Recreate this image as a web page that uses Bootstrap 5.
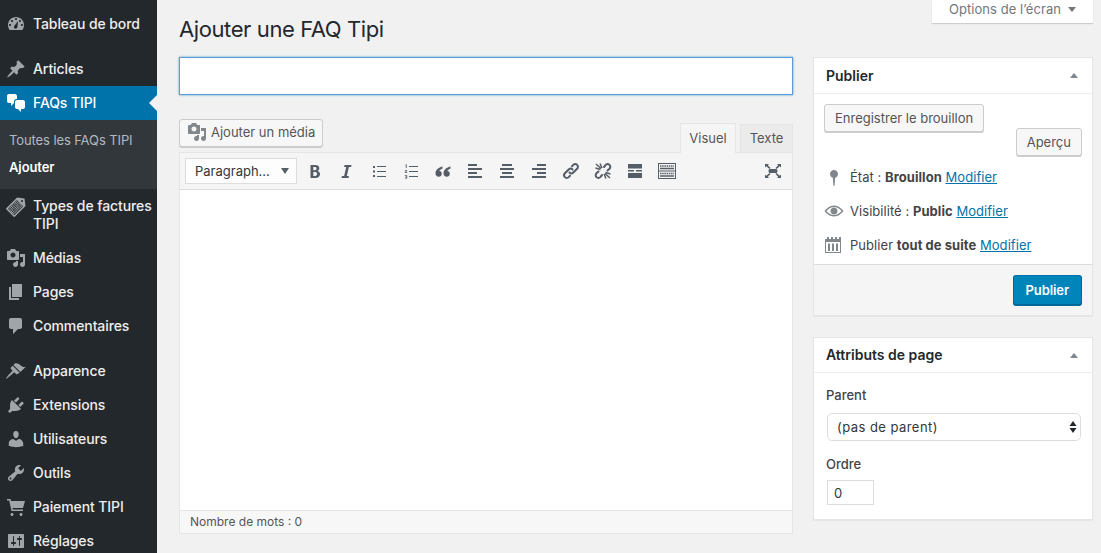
<!DOCTYPE html>
<html lang="fr">
<head>
    <meta charset="UTF-8">
    <meta name="viewport" content="width=device-width, initial-scale=1.0">
    <title>Ajouter une FAQ Tipi</title>
    <link rel="stylesheet" href="https://cdn.jsdelivr.net/npm/bootstrap@5.3.0/dist/css/bootstrap.min.css">
    <style>
        html, body { height: 553px; overflow: hidden; }
        body { background: #f1f1f1; color: #444; font-family: Inter, "Liberation Sans", sans-serif; font-size: 13px; line-height: 1.4; }
        a { color: #0073aa; }
        svg { fill: currentColor; flex: none; display: block; }

        .wp-side { width: 157px; height: 553px; background: #23282d; flex: none; }
        .wp-item { height: 34px; padding-left: 6px; color: #eee; font-size: 14px; font-weight: 500; letter-spacing: -.1px; gap: 7px; }
        .wp-item svg { color: #a0a5aa; width: 20px; height: 20px; }
        .wp-gap { margin-top: 11px; }
        .wp-item.wp-current { background: #0073aa; color: #fff; position: relative; }
        .wp-item.wp-current svg { color: #fff; }
        .wp-current::after { content: ""; position: absolute; right: 0; top: 9px; border: 8px solid transparent; border-right-color: #f1f1f1; border-left: 0; }
        .wp-sub { background: #32373c; height: 69px; padding: 9px 9px 0; }
        .wp-sub div { height: 27px; line-height: 23px; color: #b4b9be; font-size: 13px; letter-spacing: -.1px; }
        .wp-sub .wp-sub-on { color: #fff; font-weight: 600; }
        .wp-tall { height: 52px; line-height: 18px; align-items: flex-start !important; padding-top: 8px; }

        .wp-main { width: 944px; position: relative; padding: 0 8px 0 22px; }
        .wp-screen { position: absolute; right: 8px; top: 0; width: 161px; height: 23px; padding-bottom: 4px; background: #fff; box-shadow: 0 1px 1px rgba(0,0,0,.15); color: #72777c; gap: 7px; letter-spacing: .05px; }
        .wp-screen i { border: 4px solid transparent; border-top: 5px solid #72777c; border-bottom: 0; }
        .wp-title { font-size: 22px; font-weight: 400; color: #23282d; line-height: 29px; margin: 0; padding-top: 15px; letter-spacing: -.4px; height: 57px; }

        .wp-col-left { width: 614px; margin-right: 20px; }
        .wp-col-right { width: 280px; }
        .wp-titlein { height: 38px; border-radius: 0; border: 1px solid #5b9dd9; box-shadow: 0 0 2px rgba(30,140,190,.8); }
        .wp-titlein:focus { border-color: #5b9dd9; box-shadow: 0 0 2px rgba(30,140,190,.8); }

        .wp-btn { background: #f7f7f7; border: 1px solid #ccc; border-radius: 3px; box-shadow: 0 1px 0 #ccc; color: #555; font-size: 13px; height: 28px; padding: 0 10px; line-height: 26px; white-space: nowrap; }
        .wp-btn svg { color: #82878c; }
        .wp-btn-media { padding: 0 7px 2px 7px; }
        .wp-btn-pub { background: #0085ba; border: 1px solid #006799; border-top-color: #0073aa; box-shadow: 0 1px 0 #006799; color: #fff; font-weight: 600; height: 30px; line-height: 28px; padding: 0 12px; letter-spacing: -.1px; }

        .wp-edhead { height: 33px; margin-top: 24px; }
        .wp-tab { border: 1px solid #e5e5e5; border-bottom: 0; background: #ebebeb; color: #555; height: 28px; line-height: 27px; text-align: center; }
        .wp-tab-on { background: #f5f5f5; width: 56px; height: 30px; line-height: 28px; margin-bottom: -1px; position: relative; }
        .wp-tab-off { width: 53px; margin-left: 4px; }
        .wp-editor { border: 1px solid #e5e5e5; background: #fff; }
        .wp-tools { height: 37px; background: #f5f5f5; border-bottom: 1px solid #ddd; padding-left: 5px; color: #555d66; position: relative; }
        .wp-fmt { width: 112px; height: 26px; background: #fdfdfd; border: 1px solid #ddd; padding: 0 7px 0 9px; color: #32373c; font-size: 13px; margin-right: 2px; }
        .wp-fmt i { border: 4px solid transparent; border-top: 6px solid #555d66; border-bottom: 0; }
        .wp-tbtn { width: 32px; height: 20px; }
        .wp-tbtn svg { width: 20px; height: 20px; }
        .wp-canvas { height: 320px; }
        .wp-status { height: 23px; background: #f7f7f7; border-top: 1px solid #e5e5e5; padding-left: 10px; font-size: 12px; color: #555; }

        .wp-box { background: #fff; border: 1px solid #e5e5e5; box-shadow: 0 1px 1px rgba(0,0,0,.04); }
        .wp-boxhead { height: 36px; border-bottom: 1px solid #eee; padding: 0 12px; font-size: 14px; font-weight: 600; color: #23282d; }
        .wp-boxhead i { border: 4px solid transparent; border-bottom: 5px solid #82878c; border-top: 0; margin-right: 2px; }
        .wp-row { height: 34px; gap: 6px; padding-left: 10px; color: #444; letter-spacing: .05px; }
        .wp-row svg { color: #82878c; width: 20px; height: 20px; }
        .wp-pubfoot { height: 51px; background: #f5f5f5; border-top: 1px solid #ddd; padding: 0 10px; margin-top: 2px; }
        .wp-label { font-weight: 500; color: #444; }
        .wp-select { height: 28px; width: 254px; border: 1px solid #ddd; border-radius: 5px; padding: 1px 9px 0; font-size: 13px; letter-spacing: .45px; color: #32373c; background-color: #fff; background-image: url("data:image/svg+xml,%3Csvg xmlns='http://www.w3.org/2000/svg' width='8' height='12'%3E%3Cpath d='M4 0l3.5 5h-7zM4 12L.5 7h7z' fill='%2323282d'/%3E%3C/svg%3E"); background-position: right 3px center; background-size: 8px 12px; }
        .wp-num { height: 25px; width: 47px; border: 1px solid #ddd; border-radius: 0; padding: 0 6px; font-size: 13px; color: #32373c; }
    </style>
</head>
<body>
<div class="d-flex">
    <!-- Menu admin -->
    <nav class="wp-side">
        <div class="wp-item d-flex align-items-center" style="margin-top:7px">
            <svg viewBox="0 0 20 20"><path fill-rule="evenodd" d="M3.76 16h12.48c1.1-1.37 1.76-3.11 1.76-5 0-4.42-3.58-8-8-8s-8 3.58-8 8c0 1.89.66 3.63 1.76 5zM10 4c.55 0 1 .45 1 1s-.45 1-1 1-1-.45-1-1 .45-1 1-1zM6 6c.55 0 1 .45 1 1s-.45 1-1 1-1-.45-1-1 .45-1 1-1zm8 0c.55 0 1 .45 1 1s-.45 1-1 1-1-.45-1-1 .45-1 1-1zm-5.37 5.55L12 7l-.6 6.12c-.09.88-.84 1.55-1.72 1.55-.96 0-1.75-.79-1.75-1.75 0-.54.27-1.04.7-1.37zM4 10c.55 0 1 .45 1 1s-.45 1-1 1-1-.45-1-1 .45-1 1-1zm12 0c.55 0 1 .45 1 1s-.45 1-1 1-1-.45-1-1 .45-1 1-1z"/></svg>
            Tableau de bord
        </div>
        <div class="wp-item wp-gap d-flex align-items-center">
            <svg viewBox="0 0 20 20"><path d="M10.44 3.02l1.82-1.82 6.36 6.35-1.83 1.82c-1.05-.68-2.48-.57-3.41.36l-.75.75c-.92.93-1.04 2.35-.35 3.41l-1.83 1.82-2.41-2.41-2.8 2.79c-.42.42-3.38 2.71-3.8 2.29s1.86-3.39 2.28-3.81l2.79-2.79L4.1 9.36l1.83-1.82c1.05.69 2.48.57 3.4-.36l.75-.75c.93-.92 1.05-2.35.36-3.41z"/></svg>
            Articles
        </div>
        <div class="wp-item wp-current d-flex align-items-center">
            <svg viewBox="0 0 20 20"><path d="M11 6h-.82C9.07 6 8 7.2 8 8.16V10l-3 3v-3H3c-1.1 0-2-.9-2-2V3c0-1.1.9-2 2-2h6c1.1 0 2 .9 2 2v3zm0 1h6c1.1 0 2 .9 2 2v5c0 1.1-.9 2-2 2h-2v3l-3-3h-1c-1.1 0-2-.9-2-2V9c0-1.1.9-2 2-2z"/></svg>
            FAQs TIPI
        </div>
        <div class="wp-sub">
            <div>Toutes les FAQs TIPI</div>
            <div class="wp-sub-on">Ajouter</div>
        </div>
        <div class="wp-item wp-tall d-flex">
            <svg viewBox="0 0 20 20"><g transform="rotate(45 10 10)"><path d="M10 -2l6 4.500v16H4V2.500z"/><rect x="5.500" y="4.500" width="9" height="12.500" fill="#23282d"/><circle cx="10" cy="1.500" r="1" fill="#23282d"/><g fill="none" stroke="currentColor" stroke-width="1.200" stroke-dasharray="1.200 .5"><path d="M5.800 5.500h8.400M5.800 7.300h8.400M5.800 9.100h8.400M5.800 10.900h8.400M5.800 12.700h8.400M5.800 14.500h8.400M5.800 16.300h8.400"/></g></g></svg>
            <span>Types de factures TIPI</span>
        </div>
        <div class="wp-item d-flex align-items-center">
            <svg viewBox="0 0 20 20"><path d="M13 11V4c0-.55-.45-1-1-1h-1.670L9 1H5L3.670 3H2c-.55 0-1 .45-1 1v7c0 .55.45 1 1 1h10c.55 0 1-.45 1-1zM7 4.500c1.380 0 2.500 1.120 2.500 2.500S8.380 9.500 7 9.500 4.500 8.380 4.500 7 5.620 4.500 7 4.500zM14 6h5v10.500c0 1.380-1.120 2.500-2.500 2.500S14 17.880 14 16.500s1.120-2.500 2.500-2.500c.17 0 .34.02.5.05V9h-3V6zm-4 8.050V13h2v3.500c0 1.380-1.120 2.500-2.500 2.500S7 17.880 7 16.500 8.120 14 9.500 14c.17 0 .34.02.5.05z"/></svg>
            Médias
        </div>
        <div class="wp-item d-flex align-items-center">
            <svg viewBox="0 0 20 20"><path d="M6 15V2h10v13H6zm-1 1h8v2H3V5h2v11z"/></svg>
            Pages
        </div>
        <div class="wp-item d-flex align-items-center">
            <svg viewBox="0 0 20 20"><path d="M5 2h9c1.100 0 2 .9 2 2v7c0 1.100-.9 2-2 2h-2l-5 5v-5H5c-1.100 0-2-.9-2-2V4c0-1.100.9-2 2-2z"/></svg>
            Commentaires
        </div>
        <div class="wp-item wp-gap d-flex align-items-center">
            <svg viewBox="0 0 20 20"><path d="M14.480 11.060L7.410 3.990l1.500-1.500c.5-.56 2.300-.47 3.510.32 1.210.8 1.430 1.280 2.910 2.100 1.180.64 2.450 1.260 4.450.85zm-.71.71L6.700 4.700 4.930 6.470c-.39.39-.39 1.020 0 1.410l1.060 1.060c.39.39.39 1.030 0 1.420-.6.6-6.480 7.040-6 7.500.5.5 6.900-5.400 7.500-6 .39-.39 1.030-.39 1.420 0l1.060 1.060c.39.39 1.020.39 1.410 0z"/></svg>
            Apparence
        </div>
        <div class="wp-item d-flex align-items-center">
            <svg viewBox="0 0 20 20"><path d="M13.110 4.360L9.870 7.600 8 5.730l3.240-3.240c.35-.34 1.050-.2 1.560.32.52.51.66 1.210.31 1.550zm-8 1.770l.91-1.120 9.010 9.010-1.190.84c-.71.71-2.630 1.160-3.820 1.160H6.140L4.900 17.260c-.59.59-1.540.59-2.120 0-.59-.58-.59-1.530 0-2.120l1.240-1.240v-3.880c0-1.130.4-3.190 1.090-3.890zm7.260 3.970l3.240-3.240c.34-.35 1.040-.21 1.550.31.52.51.66 1.210.31 1.550l-3.240 3.250z"/></svg>
            Extensions
        </div>
        <div class="wp-item d-flex align-items-center">
            <svg viewBox="0 0 20 20"><path d="M10 9.250c-2.270 0-2.730-3.440-2.730-3.440C7 4.020 7.820 2 9.970 2c2.160 0 2.980 2.020 2.710 3.810 0 0-.41 3.440-2.680 3.440zm0 2.570L12.720 10c2.390 0 4.520 2.330 4.520 4.530v2.490s-3.650 1.130-7.240 1.130c-3.650 0-7.240-1.130-7.240-1.130v-2.490c0-2.250 1.940-4.480 4.470-4.480z"/></svg>
            Utilisateurs
        </div>
        <div class="wp-item d-flex align-items-center">
            <svg viewBox="0 0 20 20"><path fill-rule="evenodd" d="M16.680 9.770c-1.340 1.340-3.300 1.670-4.950.99l-5.410 6.520c-.99.99-2.590.99-3.580 0s-.99-2.590 0-3.570l6.520-5.420c-.68-1.650-.35-3.610.99-4.950 1.280-1.280 3.120-1.620 4.720-1.060l-2.890 2.890 2.820 2.820 2.860-2.870c.53 1.580.18 3.390-1.080 4.650zM3.810 16.210c.4.39 1.040.39 1.430 0 .4-.4.4-1.040 0-1.430-.39-.4-1.030-.4-1.430 0-.39.39-.39 1.030 0 1.430z"/></svg>
            Outils
        </div>
        <div class="wp-item d-flex align-items-center">
            <svg viewBox="0 0 20 20"><path d="M1 2h3.500l.5 2h14l-2 7H6.500l.3 1.500H17V14H5.500L3.200 3.500H1zM6 16c.8 0 1.500.7 1.500 1.500S6.800 19 6 19s-1.500-.7-1.500-1.500S5.200 16 6 16zm9 0c.8 0 1.500.7 1.500 1.500S15.800 19 15 19s-1.500-.7-1.500-1.500.7-1.500 1.500-1.500z"/></svg>
            Paiement TIPI
        </div>
        <div class="wp-item d-flex align-items-center">
            <svg viewBox="0 0 20 20"><path fill-rule="evenodd" d="M18 16V4c0-.55-.45-1-1-1H3c-.55 0-1 .45-1 1v12c0 .55.45 1 1 1h14c.55 0 1-.45 1-1zM8 11h1c.55 0 1 .45 1 1s-.45 1-1 1H8v1.500c0 .28-.22.5-.5.5s-.5-.22-.5-.5V13H6c-.55 0-1-.45-1-1s.45-1 1-1h1V5.500c0-.28.22-.5.5-.5s.5.22.5.5V11zm5-2h-1c-.55 0-1-.45-1-1s.45-1 1-1h1V5.500c0-.28.22-.5.5-.5s.5.22.5.5V7h1c.55 0 1 .45 1 1s-.45 1-1 1h-1v5.500c0 .28-.22.5-.5.5s-.5-.22-.5-.5V9z"/></svg>
            Réglages
        </div>
    </nav>

    <main class="wp-main">
        <div class="wp-screen d-flex align-items-center justify-content-center">Options de l’écran <i></i></div>
        <h1 class="wp-title">Ajouter une FAQ Tipi</h1>
        <div class="d-flex">
            <div class="wp-col-left">
                <input type="text" class="form-control wp-titlein d-block" aria-label="Titre">
                <div class="wp-edhead d-flex justify-content-between align-items-end">
                    <button type="button" class="btn wp-btn wp-btn-media d-flex align-items-center gap-1 align-self-start">
                        <svg width="20" height="20" viewBox="0 0 20 20"><path d="M13 11V4c0-.55-.45-1-1-1h-1.670L9 1H5L3.670 3H2c-.55 0-1 .45-1 1v7c0 .55.45 1 1 1h10c.55 0 1-.45 1-1zM7 4.500c1.380 0 2.500 1.120 2.500 2.500S8.380 9.500 7 9.500 4.500 8.380 4.500 7 5.620 4.500 7 4.500zM14 6h5v10.500c0 1.380-1.120 2.500-2.500 2.500S14 17.880 14 16.500s1.120-2.500 2.500-2.500c.17 0 .34.02.5.05V9h-3V6zm-4 8.050V13h2v3.500c0 1.380-1.120 2.500-2.500 2.500S7 17.880 7 16.500 8.120 14 9.500 14c.17 0 .34.02.5.05z"/></svg>
                        Ajouter un média
                    </button>
                    <div class="d-flex align-items-end">
                        <div class="wp-tab wp-tab-on">Visuel</div>
                        <div class="wp-tab wp-tab-off">Texte</div>
                    </div>
                </div>
                <div class="wp-editor">
                    <div class="wp-tools d-flex align-items-center">
                        <div class="wp-fmt d-flex align-items-center justify-content-between">Paragraph... <i></i></div>
                        <div class="wp-tbtn d-flex justify-content-center"><svg viewBox="0 0 20 20"><path d="M5.500 4v13h5c2.500 0 4.500-1.300 4.500-3.700 0-1.700-1-2.900-2.500-3.200v-.1c1.100-.4 1.800-1.500 1.800-2.700C14.300 5 12.600 4 10.300 4zm2.800 2.100h1.500c1.200 0 1.700.5 1.700 1.500s-.6 1.600-1.700 1.600H8.300zm0 5h1.800c1.200 0 1.900.6 1.900 1.900 0 1.200-.7 1.900-1.900 1.900H8.300z"/></svg></div>
                        <div class="wp-tbtn d-flex justify-content-center"><svg viewBox="0 0 20 20"><path d="M7.500 4h7l-.4 1.900h-2.200L9.800 15.100h2.100l-.4 1.900H4.500l.4-1.900h2.200L9.200 5.900H7.100z"/></svg></div>
                        <div class="wp-tbtn d-flex justify-content-center"><svg viewBox="0 0 20 20"><path d="M4 5h2v2H4zM8 5h9v1H8zM4 9.500h2v2H4zM8 10h9v1H8zM4 14h2v2H4zM8 15h9v1H8z"/></svg></div>
                        <div class="wp-tbtn d-flex justify-content-center"><svg viewBox="0 0 20 20"><path d="M4.500 3.500h1.200V7H4.800V4.500h-.3zM3.800 9.200h2.400v.8l-1.400 1.300h1.400v.7H3.800v-.7l1.400-1.400h-1.400zM3.800 14.200h2.400v3.300H3.800v-.7h1.500v-.6H4.400v-.7h.9v-.6H3.800zM8 5h9v1H8zM8 10h9v1H8zM8 15h9v1H8z"/></svg></div>
                        <div class="wp-tbtn d-flex justify-content-center"><svg viewBox="0 0 20 20"><path d="M9.500 5.500C6 6.300 2.500 8.600 2.500 12.200c0 2.200 1.300 3.600 3.200 3.600 1.800 0 3.100-1.300 3.100-3 0-1.600-1-2.700-2.500-2.700.4-1.100 1.600-1.900 3.100-2.300zM17.500 5.500c-3.500.8-7 3.100-7 6.700 0 2.200 1.300 3.600 3.200 3.600 1.800 0 3.100-1.300 3.100-3 0-1.600-1-2.700-2.500-2.700.4-1.100 1.600-1.900 3.100-2.300z"/></svg></div>
                        <div class="wp-tbtn d-flex justify-content-center"><svg viewBox="0 0 20 20"><path d="M3 3h9v2H3zM3 7h14v2H3zM3 11h9v2H3zM3 15h14v2H3z"/></svg></div>
                        <div class="wp-tbtn d-flex justify-content-center"><svg viewBox="0 0 20 20"><path d="M5 3h10v2H5zM3 7h14v2H3zM5 11h10v2H5zM3 15h14v2H3z"/></svg></div>
                        <div class="wp-tbtn d-flex justify-content-center"><svg viewBox="0 0 20 20"><path d="M8 3h9v2H8zM3 7h14v2H3zM8 11h9v2H8zM3 15h14v2H3z"/></svg></div>
                        <div class="wp-tbtn d-flex justify-content-center"><svg viewBox="0 0 20 20"><g fill="none" stroke="currentColor" stroke-width="2" stroke-linecap="round"><path d="M8.500 11.500c1.200 1.200 2.800 1 3.800 0l3.800-3.800c1.100-1.100 1.100-2.700 0-3.800s-2.700-1.100-3.800 0L11 5.200"/><path d="M11.500 8.500c-1.200-1.200-2.800-1-3.800 0l-3.800 3.800c-1.100 1.100-1.100 2.700 0 3.800s2.700 1.100 3.800 0L9 14.800"/></g></svg></div>
                        <div class="wp-tbtn d-flex justify-content-center"><svg viewBox="0 0 20 20"><g fill="none" stroke="currentColor" stroke-width="2" stroke-linecap="round"><path d="M11 6l1.700-2.100c1.100-1.100 2.700-1.100 3.800 0s1.100 2.700 0 3.800l-2 1.800"/><path d="M9 14l-1.700 2.100c-1.100 1.100-2.700 1.100-3.800 0s-1.100-2.700 0-3.800l2-1.800"/></g><g fill="none" stroke="currentColor" stroke-width="1.500"><path d="M3 3l5 4.500M7 2.500l2 4.500M2.500 7l5 1.500M17 17l-5-4.500M13 17.500l-2-4.500M17.500 13l-5-1.500"/></g></svg></div>
                        <div class="wp-tbtn d-flex justify-content-center"><svg viewBox="0 0 20 20"><path d="M3 3h14v4.500H3zM3 9h6v1.500H3zM11 9h6v1.500h-6zM3 12h14v5H3z"/></svg></div>
                        <div class="wp-tbtn d-flex justify-content-center"><svg viewBox="0 0 20 20"><rect x="1.500" y="2.500" width="17" height="15" fill="none" stroke="currentColor"/><path d="M2 9.500h16v1H2z"/><g fill="none" stroke="currentColor" stroke-width="1.500"><path d="M3 5h14M3 12.500h14" stroke-dasharray="1.500 .7"/><path d="M3 7.500h14M3 15h14"/></g></svg></div>
                        <div class="wp-tbtn d-flex justify-content-center ms-auto" style="margin-right:3px"><svg viewBox="0 0 20 20"><path d="M6.500 8h7l1 1.200v1.600l-1 1.200h-7l-1-1.200V9.200zM2 3h4L4.800 4.200 7.500 7 6.500 8 3.200 5.300 2 6.500zM18 3v3.500l-1.200-1.200L13.500 8l-1-1 2.700-2.800L14 3zM2 17v-3.500l1.200 1.200L6.500 12l1 1-2.700 2.800L6 17zM18 17h-4l1.200-1.200L12.500 13l1-1 3.300 2.700 1.200-1.200z"/></svg></div>
                    </div>
                    <div class="wp-canvas"></div>
                    <div class="wp-status d-flex align-items-center">Nombre de mots : 0</div>
                </div>
            </div>

            <div class="wp-col-right">
                <section class="wp-box" style="height:259px">
                    <div class="wp-boxhead d-flex align-items-center justify-content-between">Publier <i></i></div>
                    <div class="d-flex justify-content-between" style="padding:10px 10px 0;height:66px">
                        <button type="button" class="btn wp-btn align-self-start">Enregistrer le brouillon</button>
                        <button type="button" class="btn wp-btn align-self-start" style="margin-top:24px">Aperçu</button>
                    </div>
                    <div class="wp-row d-flex align-items-center">
                        <svg viewBox="0 0 20 20"><path d="M10 3c2.200 0 4 1.800 4 4 0 1.800-1.200 3.300-2.800 3.800L10.600 18.500 10 19l-.6-.5-.6-7.700C7.200 10.300 6 8.800 6 7c0-2.200 1.800-4 4-4z"/></svg>
                        <span>État : <b>Brouillon</b> <a href="#">Modifier</a></span>
                    </div>
                    <div class="wp-row d-flex align-items-center">
                        <svg viewBox="0 0 20 20"><path fill-rule="evenodd" d="M10 4.500c4 0 7.500 3 9.500 5.500-2 2.500-5.500 5.500-9.500 5.500S2.500 12.500.5 10c2-2.500 5.500-5.500 9.500-5.500zM10 6c-3 0-5.800 1.800-7.600 4 1.800 2.200 4.600 4 7.600 4s5.800-1.800 7.600-4C15.800 7.800 13 6 10 6zm0 .5c2 0 3.500 1.500 3.500 3.500S12 13.500 10 13.500 6.500 12 6.500 10 8 6.500 10 6.500z"/></svg>
                        <span>Visibilité : <b>Public</b> <a href="#">Modifier</a></span>
                    </div>
                    <div class="wp-row d-flex align-items-center">
                        <svg viewBox="1 0 20 20"><path fill-rule="evenodd" d="M2 4h2V2h2v2h2V2h2v2h2V2h2v2h2V2h2v2h0v14H2zM3 7v10h14V7zM5 8.500h2V16H5zM9 8.500h2V16H9zM13 8.500h2V16h-2z"/></svg>
                        <span>Publier <b>tout de suite</b> <a href="#">Modifier</a></span>
                    </div>
                    <div class="wp-pubfoot d-flex align-items-center justify-content-end">
                        <button type="button" class="btn wp-btn wp-btn-pub">Publier</button>
                    </div>
                </section>
                <section class="wp-box" style="height:183px;margin-top:21px">
                    <div class="wp-boxhead d-flex align-items-center justify-content-between" style="height:35px">Attributs de page <i></i></div>
                    <div style="padding:13px 12px 0 12px">
                        <div class="wp-label" style="margin-bottom:9px">Parent</div>
                        <select class="form-select wp-select" style="margin-left:1px" aria-label="Parent"><option>(pas de parent)</option></select>
                        <div class="wp-label" style="margin:14px 0 7px">Ordre</div>
                        <input type="text" class="form-control wp-num" style="margin-left:1px" value="0" aria-label="Ordre">
                    </div>
                </section>
            </div>
        </div>
    </main>
</div>
<script src="https://cdn.jsdelivr.net/npm/bootstrap@5.3.0/dist/js/bootstrap.bundle.min.js"></script>
</body>
</html>
